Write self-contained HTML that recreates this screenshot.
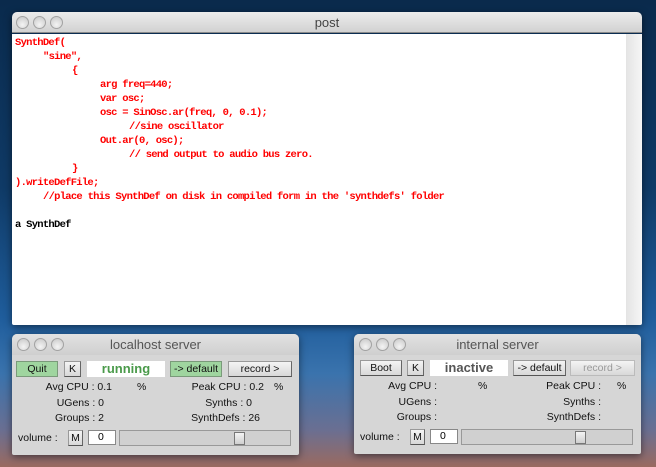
<!DOCTYPE html>
<html><head><meta charset="utf-8"><style>
*{margin:0;padding:0;box-sizing:border-box}
body{width:656px;height:467px;overflow:hidden;position:relative;font-family:"Liberation Sans",sans-serif;
background:linear-gradient(180deg,#0a2a4c 0%,#0f3a66 40%,#1f5d9c 68%,#3a73ad 80%,#6a6f92 92%,#9a6a60 100%)}
.win{position:absolute;border-radius:5px 5px 2px 2px;overflow:hidden;box-shadow:0 2px 8px rgba(0,0,0,.5)}
.tb{position:absolute;left:0;top:0;right:0;height:21px;background:linear-gradient(#ececec,#d2d2d2);border-bottom:1px solid #8a8a8a;text-align:center;font-size:13px;line-height:21px;color:#444}
.dot{position:absolute;top:4px;width:13px;height:13px;border-radius:50%;background:radial-gradient(circle at 50% 70%,#f4f4f4,#c6c6c6);border:1px solid #a2a2a2}
.code{position:absolute;left:0;top:22px;right:16px;bottom:0;background:#fff;font-family:"Liberation Mono",monospace;font-weight:bold;font-size:10.5px;letter-spacing:-0.73px;color:#f00}
.code div{position:absolute;white-space:pre;line-height:14px}
.sb{position:absolute;right:0;top:22px;width:16px;bottom:0;background:linear-gradient(90deg,#e4e4e4,#f6f6f6)}
.sw{background:#d6d6d6}
.sw .tb{background:linear-gradient(#e2e2e2,#cfcfcf);border-bottom:none;font-size:13px;color:#555}
.b{position:absolute;height:16px;font-size:10.5px;line-height:15px;text-align:center;color:#111;background:linear-gradient(#f4f4f4,#d8d8d8);border:1px solid #999;border-right-color:#666;border-bottom-color:#555}
.g{background:#9fd59f;border-color:#7a9a7a}
.st{position:absolute;height:16px;background:#fff;text-align:center;font-weight:bold;font-size:13px;line-height:16px}
.l{position:absolute;font-size:10.5px;color:#111;white-space:pre}
.r{text-align:right}
.f{position:absolute;height:15px;background:#fff;border:1px solid #888;font-size:10.5px;padding-left:9px;line-height:12px}
.sl{position:absolute;height:16px;border:1px solid #999;background:#d0d0d0}
.th{position:absolute;top:1px;width:11px;height:13px;background:linear-gradient(#f4f4f4,#cfcfcf);border:1px solid #777}
</style></head><body>

<div class="win" style="left:12px;top:12px;width:630px;height:313px">
<div class="tb">post<span class="dot" style="left:4px"></span><span class="dot" style="left:21px"></span><span class="dot" style="left:38px"></span></div>
<div class="code">
<div style="left:3px;top:2px">SynthDef(</div>
<div style="left:31px;top:16px">"sine",</div>
<div style="left:60px;top:30px">{</div>
<div style="left:88px;top:44px">arg freq=440;</div>
<div style="left:88px;top:58px">var osc;</div>
<div style="left:88px;top:72px">osc = SinOsc.ar(freq, 0, 0.1);</div>
<div style="left:117px;top:86px">//sine oscillator</div>
<div style="left:88px;top:100px">Out.ar(0, osc);</div>
<div style="left:117px;top:114px">// send output to audio bus zero.</div>
<div style="left:60px;top:128px">}</div>
<div style="left:3px;top:142px">).writeDefFile;</div>
<div style="left:31px;top:156px">//place this SynthDef on disk in compiled form in the 'synthdefs' folder</div>
<div style="left:3px;top:184px;color:#000">a SynthDef</div>
</div>
<div class="sb"></div>
</div>

<div class="win sw" style="left:12px;top:334px;width:287px;height:121px">
<div class="tb">localhost server<span class="dot" style="left:5px"></span><span class="dot" style="left:22px"></span><span class="dot" style="left:39px"></span></div>
<div class="b g" style="left:4px;top:27px;width:42px">Quit</div>
<div class="b" style="left:52px;top:27px;width:17px">K</div>
<div class="st" style="left:75px;top:27px;width:78px;color:#4a9a4a">running</div>
<div class="b g" style="left:158px;top:27px;width:52px">-&gt; default</div>
<div class="b" style="left:216px;top:27px;width:64px">record &gt;</div>
<div class="l r" style="left:0;width:100px;top:47px">Avg CPU : 0.1</div><div class="l" style="left:125px;top:47px">%</div>
<div class="l r" style="left:0;width:92px;top:63px">UGens : 0</div>
<div class="l r" style="left:0;width:92px;top:78px">Groups : 2</div>
<div class="l r" style="left:100px;width:152px;top:47px">Peak CPU : 0.2</div><div class="l" style="left:262px;top:47px">%</div>
<div class="l r" style="left:100px;width:140px;top:63px">Synths : 0</div>
<div class="l r" style="left:100px;width:148px;top:78px">SynthDefs : 26</div>
<div class="l" style="left:6px;top:98px">volume :</div>
<div class="b" style="left:56px;top:96px;width:15px">M</div>
<div class="f" style="left:76px;top:96px;width:28px">0</div>
<div class="sl" style="left:107px;top:96px;width:172px"><div class="th" style="left:114px"></div></div>
</div>

<div class="win sw" style="left:354px;top:334px;width:287px;height:120px">
<div class="tb">internal server<span class="dot" style="left:5px"></span><span class="dot" style="left:22px"></span><span class="dot" style="left:39px"></span></div>
<div class="b" style="left:6px;top:26px;width:42px">Boot</div>
<div class="b" style="left:53px;top:26px;width:17px">K</div>
<div class="st" style="left:76px;top:26px;width:78px;color:#555">inactive</div>
<div class="b" style="left:159px;top:26px;width:53px">-&gt; default</div>
<div class="b" style="left:216px;top:26px;width:65px;color:#999;border-color:#bbb">record &gt;</div>
<div class="l r" style="left:0;width:83px;top:46px">Avg CPU :</div><div class="l" style="left:124px;top:46px">%</div>
<div class="l r" style="left:0;width:83px;top:62px">UGens :</div>
<div class="l r" style="left:0;width:83px;top:77px">Groups :</div>
<div class="l r" style="left:100px;width:147px;top:46px">Peak CPU :</div><div class="l" style="left:263px;top:46px">%</div>
<div class="l r" style="left:100px;width:147px;top:62px">Synths :</div>
<div class="l r" style="left:100px;width:147px;top:77px">SynthDefs :</div>
<div class="l" style="left:6px;top:97px">volume :</div>
<div class="b" style="left:56px;top:95px;width:15px">M</div>
<div class="f" style="left:76px;top:95px;width:28px">0</div>
<div class="sl" style="left:107px;top:95px;width:172px"><div class="th" style="left:113px"></div></div>
</div>
</body></html>
